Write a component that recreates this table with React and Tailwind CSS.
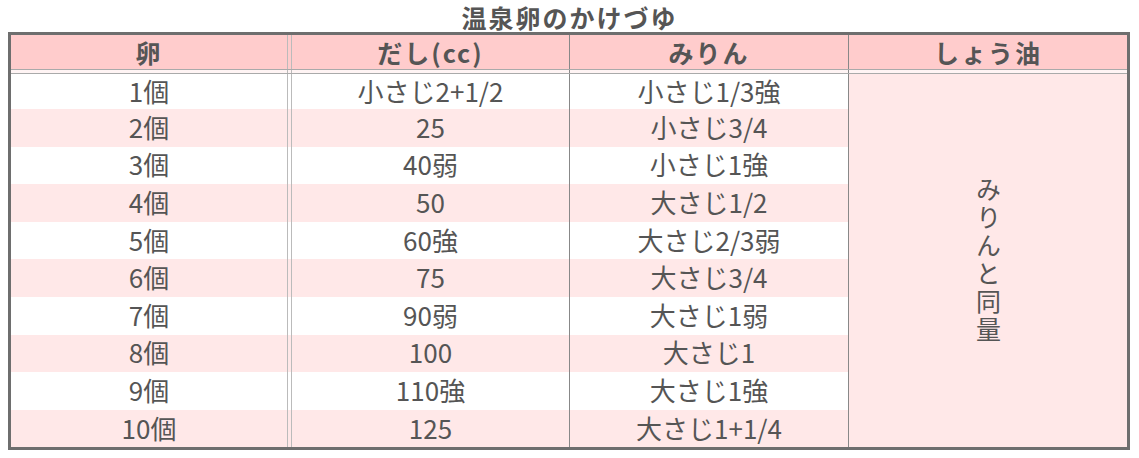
import React from "react";

const rows = [
  ["1個", "小さじ2+1/2", "小さじ1/3強"],
  ["2個", "25", "小さじ3/4"],
  ["3個", "40弱", "小さじ1強"],
  ["4個", "50", "大さじ1/2"],
  ["5個", "60強", "大さじ2/3弱"],
  ["6個", "75", "大さじ3/4"],
  ["7個", "90弱", "大さじ1弱"],
  ["8個", "100", "大さじ1"],
  ["9個", "110強", "大さじ1強"],
  ["10個", "125", "大さじ1+1/4"],
];

function Cells({ a, b, c, h, bg, bold }) {
  const txt = bold ? "font-bold tracking-[2px] text-[25px]" : "text-[26px] pb-[2px]";
  return (
    <div className={`flex ${h} ${bg}`}>
      <div className={`w-[277px] border-r border-[#bbbbbb] flex items-center justify-center ${txt}`}>{a}</div>
      <div className="w-[3px]" />
      <div className={`w-[278px] border-l border-[#bbbbbb] flex items-center justify-center ${txt}`}>{b}</div>
      <div className={`w-[279px] border-l border-[#888888] flex items-center justify-center ${txt}`}>{c}</div>
    </div>
  );
}

export default function App() {
  return (
    <div
      className="w-[1139px] h-[458px] bg-white text-[#555555] px-2"
      style={{ fontFamily: '"Noto Sans CJK JP", sans-serif' }}
    >
      <div className="h-[32px] flex items-center justify-center text-[25px] font-bold tracking-[2px] leading-none pt-[2px]">
        温泉卵のかけづゆ
      </div>
      <div className="w-[1122px] border-[3px] border-[#6e6e6e] leading-none">
        {/* header */}
        <div className="flex">
          <Cells a="卵" b="だし(cc)" c="みりん" h="h-[34px]" bg="bg-[#ffcccc]" bold />
          <div className="w-[279px] border-l border-[#888888] bg-[#ffcccc] flex items-center justify-center font-bold tracking-[2px] text-[25px]">
            しょう油
          </div>
        </div>
        {/* double separator */}
        <div className="flex h-[5px] border-y border-[#aaaaaa] bg-[#fff4f4]">
          <div className="w-[277px] border-r border-[#bbbbbb]" />
          <div className="w-[3px]" />
          <div className="w-[278px] border-l border-[#bbbbbb]" />
          <div className="w-[279px] border-l border-[#888888]" />
          <div className="w-[279px] border-l border-[#888888]" />
        </div>
        {/* body */}
        <div className="flex">
          <div className="flex flex-col w-[837px]">
            {rows.map((r, i) => (
              <Cells
                key={i}
                a={r[0]}
                b={r[1]}
                c={r[2]}
                h={i === 0 ? "h-[35px]" : "h-[37.6px]"}
                bg={i % 2 === 0 ? "bg-white" : "bg-[#ffe8e8]"}
              />
            ))}
          </div>
          <div className="w-[279px] border-l border-[#888888] bg-[#ffe8e8] flex items-center justify-center">
            <div className="[writing-mode:vertical-rl] tracking-[3px] text-[25px]">みりんと同量</div>
          </div>
        </div>
      </div>
    </div>
  );
}
